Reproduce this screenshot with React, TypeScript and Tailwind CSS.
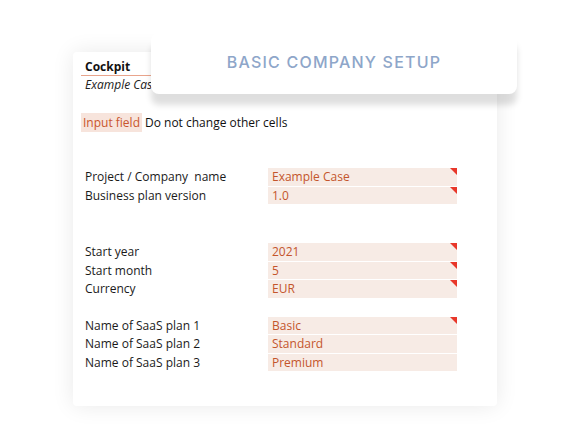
import React from 'react';

type Row = { label: string; value: string; flag?: boolean };

const groups: Row[][] = [
  [
    { label: 'Project / Company\u00a0 name', value: 'Example Case', flag: true },
    { label: 'Business plan version', value: '1.0', flag: true },
  ],
  [
    { label: 'Start year', value: '2021', flag: true },
    { label: 'Start month', value: '5', flag: true },
    { label: 'Currency', value: 'EUR', flag: true },
  ],
  [
    { label: 'Name of SaaS plan 1', value: 'Basic', flag: true },
    { label: 'Name of SaaS plan 2', value: 'Standard' },
    { label: 'Name of SaaS plan 3', value: 'Premium' },
  ],
];

const InputRow: React.FC<{ row: Row }> = ({ row }) => (
  <div className="flex h-[18.5px] items-start">
    <div className="w-[187px] pl-1 leading-[18px] text-[#1a1a1a]">{row.label}</div>
    <div className="relative h-[17.5px] w-[189px] bg-[#f7ebe5] pl-[4px] leading-[18px] text-[#c4552c]">
      {row.value}
      {row.flag && (
        <span className="absolute right-0 top-0 h-0 w-0 border-l-[7px] border-t-[7px] border-l-transparent border-t-[#e8372a]" />
      )}
    </div>
  </div>
);

export default function App() {
  return (
    <div
      className="relative h-[436px] w-[575px] overflow-hidden bg-white"
      style={{ fontFamily: '"Open Sans", sans-serif' }}
    >
      <div className="ml-[73px] mt-[52px] h-[354px] w-[424px] rounded-[4px] bg-white pl-2 pt-[7px] text-[12px] shadow-[0_0_22px_rgba(0,0,0,0.09)]">
        <div className="w-[100px] border-b border-[#e9a48c] pl-1 font-bold leading-[16px] text-[#111]">
          Cockpit
        </div>
        <div className="pl-1 pt-[1px] italic leading-[16px] text-[#222]">Example Case</div>

        <div className="mt-[20px] flex h-[19px] items-center">
          <span className="flex h-[19px] items-center bg-[#f7e4dc] px-[2px] text-[#c9552c]">Input field</span>
          <span className="pl-[3px] text-[#111]">Do not change other cells</span>
        </div>

        <div className="mt-[36px] flex flex-col">
          {groups.map((g, i) => (
            <div key={i} className={i === 0 ? '' : i === 1 ? 'mt-[38px]' : 'mt-[18px]'}>
              {g.map((r) => (
                <InputRow key={r.label} row={r} />
              ))}
            </div>
          ))}
        </div>
      </div>

      <div className="absolute left-[151px] top-[33px] flex h-[61px] w-[366px] items-center justify-center rounded-[8px] bg-white pb-[3px] shadow-[0_11px_6px_rgba(0,0,0,0.13)]">
        <span
          className="text-[16px] font-medium tracking-[0.075em] text-[#8ea6c9]"
          style={{ fontFamily: 'Inter, sans-serif' }}
        >
          BASIC COMPANY SETUP
        </span>
      </div>
    </div>
  );
}
